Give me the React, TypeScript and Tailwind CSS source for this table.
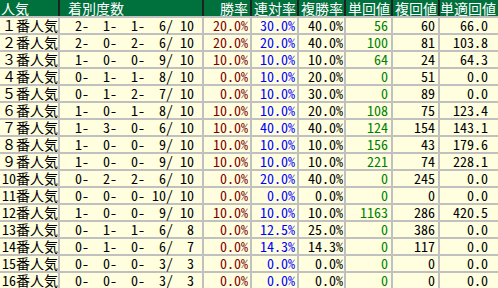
import React from "react";

type Row = [string, number, number, number, number, number, string, string, string, string, string, string];

const rows: Row[] = [
  ["１番人気", 2, 1, 1, 6, 10, "20.0%", "30.0%", "40.0%", "56", "60", "66.0"],
  ["２番人気", 2, 0, 2, 6, 10, "20.0%", "20.0%", "40.0%", "100", "81", "103.8"],
  ["３番人気", 1, 0, 0, 9, 10, "10.0%", "10.0%", "10.0%", "64", "24", "64.3"],
  ["４番人気", 0, 1, 1, 8, 10, "0.0%", "10.0%", "20.0%", "0", "51", "0.0"],
  ["５番人気", 0, 1, 2, 7, 10, "0.0%", "10.0%", "30.0%", "0", "89", "0.0"],
  ["６番人気", 1, 0, 1, 8, 10, "10.0%", "10.0%", "20.0%", "108", "75", "123.4"],
  ["７番人気", 1, 3, 0, 6, 10, "10.0%", "40.0%", "40.0%", "124", "154", "143.1"],
  ["８番人気", 1, 0, 0, 9, 10, "10.0%", "10.0%", "10.0%", "156", "43", "179.6"],
  ["９番人気", 1, 0, 0, 9, 10, "10.0%", "10.0%", "10.0%", "221", "74", "228.1"],
  ["10番人気", 0, 2, 2, 6, 10, "0.0%", "20.0%", "40.0%", "0", "245", "0.0"],
  ["11番人気", 0, 0, 0, 10, 10, "0.0%", "0.0%", "0.0%", "0", "0", "0.0"],
  ["12番人気", 1, 0, 0, 9, 10, "10.0%", "10.0%", "10.0%", "1163", "286", "420.5"],
  ["13番人気", 0, 1, 1, 6, 8, "0.0%", "12.5%", "25.0%", "0", "386", "0.0"],
  ["14番人気", 0, 1, 0, 6, 7, "0.0%", "14.3%", "14.3%", "0", "117", "0.0"],
  ["15番人気", 0, 0, 0, 3, 3, "0.0%", "0.0%", "0.0%", "0", "0", "0.0"],
  ["16番人気", 0, 0, 0, 3, 3, "0.0%", "0.0%", "0.0%", "0", "0", "0.0"],
];

const pad = (n: number, w: number) => String(n).padStart(w, " ");

const cols = "grid grid-cols-[58px_142px_46px_45px_45px_45px_45px_58px] gap-x-[2px]";
const font =
  "font-['Noto_Sans_CJK_JP','Noto_Sans',sans-serif] text-[14px] [font-feature-settings:'hwid'] whitespace-pre";

export default function App() {
  return (
    <div className={`w-[498px] h-[288px] overflow-hidden bg-[#c0c0c0] flex flex-col gap-y-[2px] ${font}`}>
      <div className={`${cols} h-[16px] bg-[#202020] text-white leading-[16px]`}>
        <div className="bg-[#00703c] pl-[1px]">人気</div>
        <div className="bg-[#00703c] pl-[8px]">着別度数</div>
        <div className="bg-[#00703c] text-right pr-[2px]">勝率</div>
        <div className="bg-[#00703c] text-right pr-[1px]">連対率</div>
        <div className="bg-[#00703c] text-right pr-[1px]">複勝率</div>
        <div className="bg-[#00703c] text-right pr-[1px]">単回値</div>
        <div className="bg-[#00703c] text-right pr-[1px]">複回値</div>
        <div className="bg-[#00703c] text-right pr-[2px]">単適回値</div>
      </div>
      {rows.map((r) => (
        <div key={r[0]} className={`${cols} h-[15px] leading-[15px] text-black`}>
          <div
            className={
              /[0-9]/.test(r[0])
                ? "bg-[#ffffe0] pl-[2px]"
                : "bg-[#ffffe0] pl-[2px] [font-feature-settings:normal]"
            }
          >
            {r[0]}
          </div>
          <div className="bg-[#ffffe0] pl-[8px]">
            {`${pad(r[1], 2)}-${pad(r[2], 3)}-${pad(r[3], 3)}-${pad(r[4], 3)}/${pad(r[5], 3)}`}
          </div>
          <div className="bg-[#ffffe0] text-right pr-[2px] text-[#800000]">{r[6]}</div>
          <div className="bg-[#ffffe0] text-right pr-[2px] text-[#0000ff]">{r[7]}</div>
          <div className="bg-[#ffffe0] text-right pr-[1px]">{r[8]}</div>
          <div className="bg-[#ffffe0] text-right pr-[3px] text-[#008000]">{r[9]}</div>
          <div className="bg-[#ffffe0] text-right pr-[3px]">{r[10]}</div>
          <div className="bg-[#ffffe0] text-right pr-[10px]">{r[11]}</div>
        </div>
      ))}
    </div>
  );
}
